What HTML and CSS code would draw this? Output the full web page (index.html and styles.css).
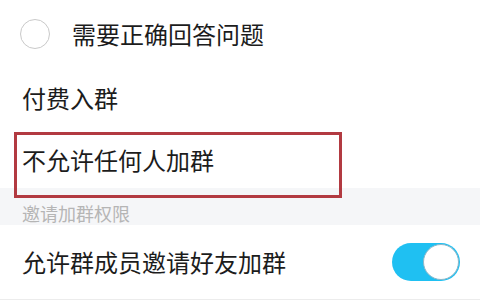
FILE: index.html
```html
<!DOCTYPE html>
<html lang="zh-CN">
<head>
    <meta charset="utf-8">
    <link rel="stylesheet" href="styles.css">
</head>
<body>
    <div class="settings">
        <div class="row option">
            <span class="radio"></span>
            <span class="label">需要正确回答问题</span>
        </div>
        <div class="row plain paid">
            <span class="label">付费入群</span>
        </div>
        <div class="row plain deny">
            <span class="label">不允许任何人加群</span>
            <div class="highlight"></div>
        </div>
        <div class="section">邀请加群权限</div>
        <div class="row switch-row">
            <span class="label">允许群成员邀请好友加群</span>
            <span class="switch on"><span class="knob"></span></span>
        </div>
    </div>
</body>
</html>
```

FILE: styles.css
```css
html, body {
    width: 100%;
    height: 100%;
    margin: 0;
    padding: 0;
    background: #fff;
    overflow: hidden;
    font-family: "Noto Sans CJK SC", "Noto Sans", sans-serif;
    color: #1c1c1c;
}

* {
    box-sizing: border-box;
}

.settings {
    display: flex;
    flex-direction: column;
}

.row {
    display: flex;
    align-items: center;
    padding-left: 22px;
    font-size: 24px;
    line-height: 1;
}

.row.option {
    height: 68px;
    padding-left: 20px;
}

.row.option .radio {
    width: 30px;
    height: 30px;
    border: 1.5px solid #c9c9c9;
    border-radius: 50%;
    margin-right: 22px;
}

.row.paid {
    height: 60px;
}

.row.deny {
    position: relative;
    height: 60px;
    padding-top: 4px;
}

.highlight {
    position: absolute;
    left: 14px;
    top: 4px;
    width: 328px;
    height: 66px;
    border: 3px solid #b23a41;
    z-index: 2;
}

.section {
    height: 37px;
    background: #f5f6f8;
    padding-left: 22px;
    padding-top: 16px;
    font-size: 18px;
    line-height: 1;
    color: #b5b5b5;
}

.switch-row {
    height: 75px;
    justify-content: space-between;
    padding-right: 20px;
    border-bottom: 1px solid #ececec;
}

.switch {
    display: flex;
    align-items: center;
    justify-content: flex-end;
    width: 68px;
    height: 38px;
    border-radius: 19px;
    background: #1fc0f2;
    padding: 1px;
}

.switch .knob {
    width: 36px;
    height: 36px;
    border-radius: 50%;
    background: #fff;
    border: 1.5px solid #8fb7c8;
}
```
